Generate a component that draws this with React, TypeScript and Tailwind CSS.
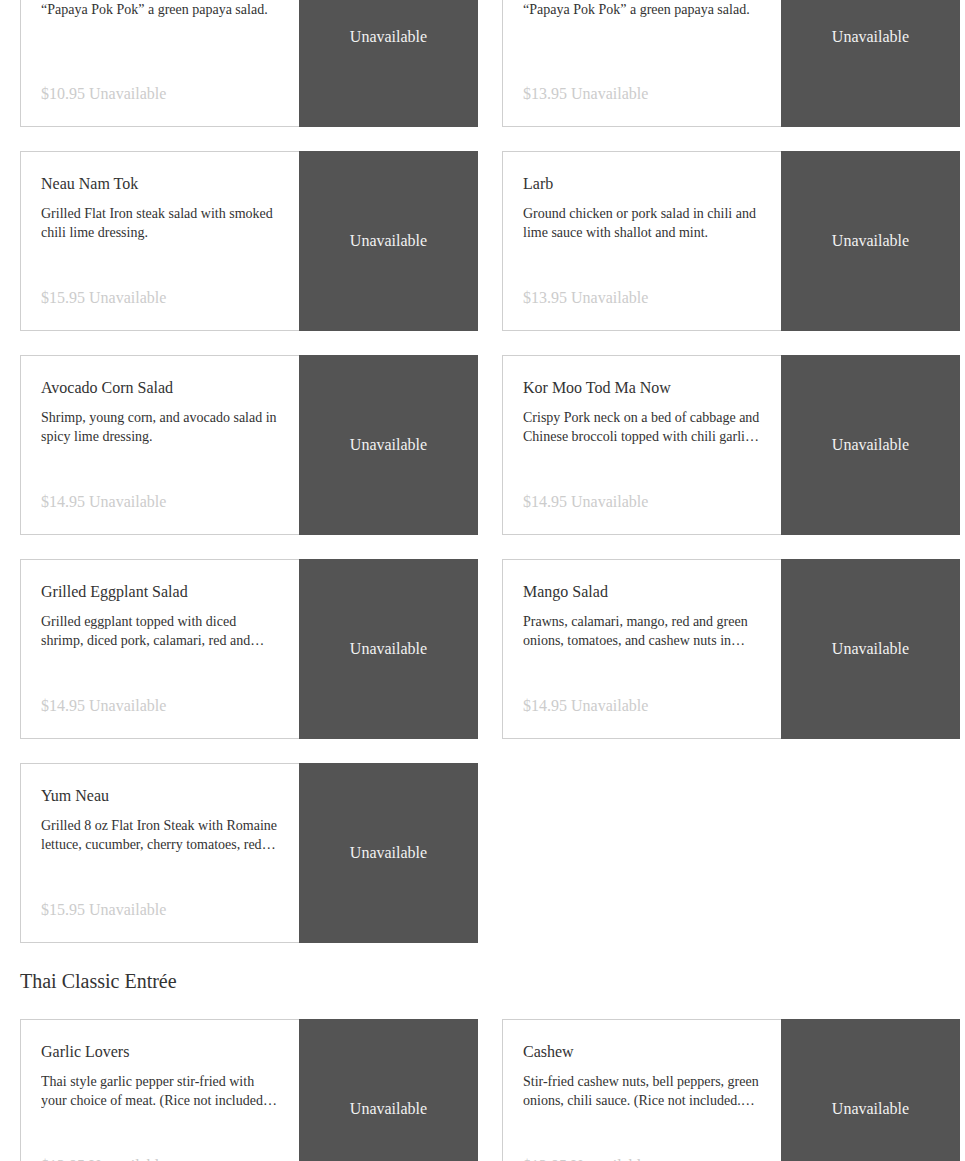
import React from "react";

type Item = { name: string; desc: string; price: string };

const salads: Item[] = [
  { name: "Som Tum", desc: "\u201cPapaya Pok Pok\u201d a green papaya salad.", price: "$10.95" },
  { name: "Som Tum Thai", desc: "\u201cPapaya Pok Pok\u201d a green papaya salad.", price: "$13.95" },
  { name: "Neau Nam Tok", desc: "Grilled Flat Iron steak salad with smoked chili lime dressing.", price: "$15.95" },
  { name: "Larb", desc: "Ground chicken or pork salad in chili and lime sauce with shallot and mint.", price: "$13.95" },
  { name: "Avocado Corn Salad", desc: "Shrimp, young corn, and avocado salad in spicy lime dressing.", price: "$14.95" },
  { name: "Kor Moo Tod Ma Now", desc: "Crispy Pork neck on a bed of cabbage and Chinese broccoli topped with chili garlic lime sauce.", price: "$14.95" },
  { name: "Grilled Eggplant Salad", desc: "Grilled eggplant topped with diced shrimp, diced pork, calamari, red and green onions in chili lime dressing.", price: "$14.95" },
  { name: "Mango Salad", desc: "Prawns, calamari, mango, red and green onions, tomatoes, and cashew nuts in\nchili lime dressing.", price: "$14.95" },
  { name: "Yum Neau", desc: "Grilled 8 oz Flat Iron Steak with Romaine lettuce, cucumber, cherry tomatoes, red onions in chili lime dressing.", price: "$15.95" },
];

const entrees: Item[] = [
  { name: "Garlic Lovers", desc: "Thai style garlic pepper stir-fried with your choice of meat. (Rice not included.) Served with steamed vegetables.", price: "$13.95" },
  { name: "Cashew", desc: "Stir-fried cashew nuts, bell peppers, green onions, chili sauce. (Rice not included. Served with your choice of meat.)", price: "$13.95" },
];

function Card({ item }: { item: Item }) {
  return (
    <div className="flex h-[180px] w-[458px] border border-r-0 border-[#cfcfcf] bg-white">
      <div className="flex flex-1 flex-col px-5 pt-[21px] pb-[21px]">
        <div className="text-[16px] leading-[22px] text-[#333]">{item.name}</div>
        <div className="mt-[9px] line-clamp-2 whitespace-pre-line text-[14px] leading-[19px] text-[#333]">
          {item.desc}
        </div>
        <div className="mt-auto text-[16px] leading-[22px] text-[#cccccc]">
          {item.price} Unavailable
        </div>
      </div>
      <div className="-my-px flex w-[179px] items-center justify-center bg-[#545454] text-[16px] text-[#f2f2f2]">
        Unavailable
      </div>
    </div>
  );
}

export default function App() {
  return (
    <div
      className="min-h-screen bg-white"
      style={{ fontFamily: '"Liberation Serif", "Times New Roman", serif' }}
    >
      <div className="-mt-[53px] ml-5 w-[940px]">
        <div className="grid grid-cols-2 gap-6">
          {salads.map((it, i) => (
            <Card key={i} item={it} />
          ))}
        </div>
        <h2 className="mt-6 mb-6 text-[20px] leading-[28px] text-[#333]">Thai Classic Entrée</h2>
        <div className="grid grid-cols-2 gap-6 pb-10">
          {entrees.map((it, i) => (
            <Card key={i} item={it} />
          ))}
        </div>
      </div>
    </div>
  );
}
